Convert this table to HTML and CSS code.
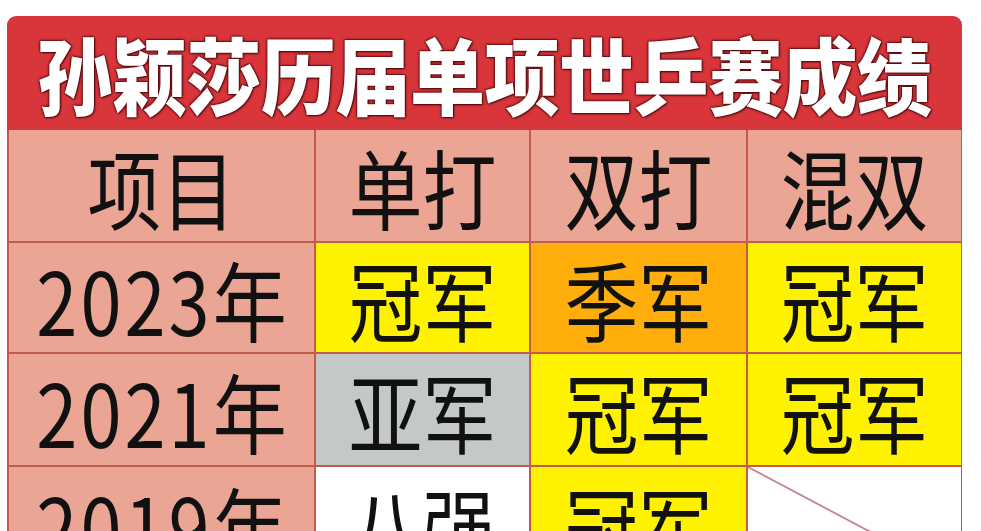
FILE: index.html
```html
<!DOCTYPE html>
<html lang="zh-CN">
<head>
<meta charset="utf-8">
<link rel="stylesheet" href="styles.css">
</head>
<body>
<div class="card">
  <div class="title"><span class="tt">孙颖莎历届单项世乒赛成绩</span></div>
  <div class="grid">
    <div class="cell head"><span class="tx">项目</span></div>
    <div class="cell head"><span class="tx">单打</span></div>
    <div class="cell head"><span class="tx">双打</span></div>
    <div class="cell head"><span class="tx">混双</span></div>

    <div class="cell head"><span class="tx year">2023年</span></div>
    <div class="cell gold"><span class="tx">冠军</span></div>
    <div class="cell bronze"><span class="tx">季军</span></div>
    <div class="cell gold"><span class="tx">冠军</span></div>

    <div class="cell head"><span class="tx year">2021年</span></div>
    <div class="cell silver"><span class="tx">亚军</span></div>
    <div class="cell gold"><span class="tx">冠军</span></div>
    <div class="cell gold"><span class="tx">冠军</span></div>

    <div class="cell head"><span class="tx year">2019年</span></div>
    <div class="cell plain"><span class="tx">八强</span></div>
    <div class="cell gold"><span class="tx">冠军</span></div>
    <div class="cell none"></div>
  </div>
</div>
</body>
</html>
```

FILE: styles.css
```css
html, body {
  margin: 0;
  padding: 0;
  background: #ffffff;
  overflow: hidden;
}
body {
  font-family: "Noto Sans CJK SC", "Noto Sans", sans-serif;
}
.card {
  margin: 16px 0 0 7px;
  width: 955px;
}
.title {
  height: 114px;
  background: #d8363b;
  border-radius: 9px 9px 0 0;
  display: flex;
  align-items: center;
  justify-content: center;
}
.tt {
  display: inline-block;
  color: #ffffff;
  font-weight: 900;
  font-size: 75px;
  line-height: 80px;
  letter-spacing: -0.5px;
  transform: scaleY(1.12);
  text-shadow: 1px 1px 2px #4a0508, -1px -1px 2px rgba(74,5,8,0.6), 1px -1px 1px rgba(74,5,8,0.4), -1px 1px 1px rgba(74,5,8,0.4);
}
.grid {
  display: grid;
  grid-template-columns: 305px 213px 215px 213px;
  grid-template-rows: 111px 109px 111px 113px;
  gap: 2px;
  padding: 0 1px 0 2px;
  background: #c45a4c;
}
.cell {
  display: flex;
  align-items: center;
  justify-content: center;
  color: #111111;
}
.tx {
  display: inline-block;
  font-size: 74px;
  line-height: 74px;
  transform: scaleY(1.18);
}
.year {
  letter-spacing: 3px;
  margin-left: 3px;
}
.head { background: #eba594; }
.gold { background: #fff200; }
.bronze { background: #ffae0c; }
.silver { background: #c5c8c8; }
.plain { background: #ffffff; }
.none {
  background: linear-gradient(to top right, #ffffff calc(50% - 1.5px), #b56a78 50%, #ffffff calc(50% + 1.5px));
}
```
